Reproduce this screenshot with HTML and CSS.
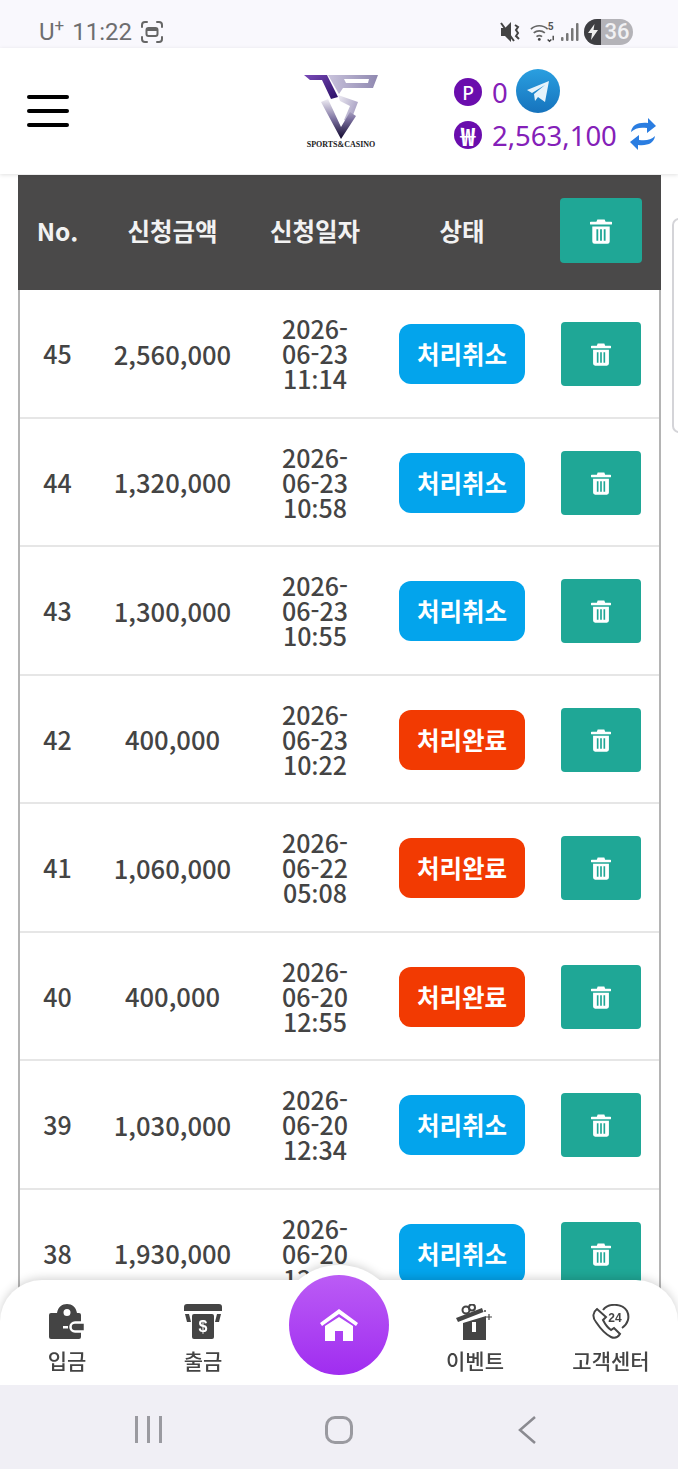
FILE: index.html
```html
<!DOCTYPE html>
<html lang="ko">
<head>
<meta charset="UTF-8">
<meta name="viewport" content="width=device-width, initial-scale=1.0">
<title>출금내역</title>
<link rel="stylesheet" href="styles.css">
</head>
<body>
<svg class="defs" width="0" height="0">
    <defs>
        <symbol id="trash" viewBox="0 0 24 28">
            <path fill="#fff" d="M8 1.5h8l1 2.5h6a1 1 0 0 1 0 3H1a1 1 0 0 1 0-3h6zM2.500 9h19v16.500a2.500 2.500 0 0 1-2.500 2.500H5a2.500 2.500 0 0 1-2.500-2.500zM7 12v12.500h2V12zm4 0v12.500h2V12zm4 0v12.500h2V12z" fill-rule="evenodd"/>
        </symbol>
    </defs>
</svg>
<div class="page">
    <!-- status bar -->
    <div class="status">
        <div class="status-left">
            <span class="carrier">U<sup>+</sup></span>
            <span>11:22</span>
            <svg width="24" height="24" viewBox="0 0 24 24" fill="none" stroke="#666" stroke-width="2" stroke-linecap="round">
                <path d="M2 7V5a3 3 0 0 1 3-3h2M17 2h2a3 3 0 0 1 3 3v2M22 17v2a3 3 0 0 1-3 3h-2M7 22H5a3 3 0 0 1-3-3v-2"/>
                <rect x="6.500" y="8" width="11" height="8" rx="2"/>
                <rect x="7" y="8" width="10" height="3" fill="#666" stroke="none"/>
            </svg>
        </div>
        <div class="status-right">
            <svg width="20" height="24" viewBox="0 0 20 24">
                <path fill="#444" d="M1 8h4l6-6v20l-6-6H1z"/>
                <path stroke="#444" stroke-width="2" fill="none" d="M1 3l13 18M15 5l3 2-2 3 2 3-2 3 3 3"/>
            </svg>
            <svg class="wifi" width="26" height="24" viewBox="0 0 28 24" fill="none" stroke="#666" stroke-width="1.800">
                <path d="M1 9c5-5 13-5 18 0M4 13c3.500-3 8.500-3 12 0M7 17c2-1.600 4-1.600 6 0"/>
                <circle cx="10" cy="20" r="1.500" fill="#444" stroke="none"/>
                <path d="M19 20l2 2 2-2M25 21v-5" stroke="#444" stroke-width="1.500"/>
                <text x="19" y="10" class="wifi-five">5</text>
            </svg>
            <svg width="18" height="20" viewBox="0 0 18 20" fill="#777">
                <rect x="0" y="15" width="2.500" height="4" rx="1"/>
                <rect x="5" y="11" width="2.500" height="8" rx="1"/>
                <rect x="10" y="6" width="2.500" height="13" rx="1"/>
                <rect x="15" y="1" width="2.500" height="18" rx="1"/>
            </svg>
            <div class="battery">
                <span class="battery-bolt">
                    <svg width="10" height="16" viewBox="0 0 10 16"><path fill="#eee" d="M6.500 0L0 9h4l-1 7 7-10H5.500z"/></svg>
                </span>
                <span class="battery-num">36</span>
            </div>
        </div>
    </div>

    <!-- header -->
    <header class="top">
        <div class="burger"><span></span><span></span><span></span></div>
        <div class="logo">
            <svg width="74" height="68" viewBox="0 0 74 68">
                <defs>
                    <linearGradient id="logoA" x1="0" y1="0" x2="1" y2="1">
                        <stop offset="0" stop-color="#7a4bb8"/>
                        <stop offset="1" stop-color="#2a0f66"/>
                    </linearGradient>
                    <linearGradient id="logoB" x1="0" y1="0" x2="0" y2="1">
                        <stop offset="0" stop-color="#f0eef4"/>
                        <stop offset="0.5" stop-color="#7d72a0"/>
                        <stop offset="1" stop-color="#0e052c"/>
                    </linearGradient>
                    <linearGradient id="logoC" x1="0" y1="0" x2="1" y2="0">
                        <stop offset="0" stop-color="#c9c3dc"/>
                        <stop offset="1" stop-color="#8f88b0"/>
                    </linearGradient>
                    <linearGradient id="logoD" x1="0" y1="0" x2="1" y2="0.600">
                        <stop offset="0" stop-color="#eeecf3"/>
                        <stop offset="1" stop-color="#a49cc0"/>
                    </linearGradient>
                </defs>
                <path fill="url(#logoC)" fill-rule="evenodd" d="M24 3h50l-5 13H39l-4 6zM40 7l2 4h22l1-4z"/>
                <path fill="url(#logoA)" d="M0 3h23l11 22-7 2-9-19H6z"/>
                <path fill="url(#logoD)" d="M34 23l20 7-8 21-6-3 6-14-10-5z"/>
                <path fill="url(#logoB)" d="M17 30l7-3 13 28 9-15 6 4-15 23z"/>
            </svg>
            <span class="logo-text">SPORTS&amp;CASINO</span>
        </div>
        <div class="balance">
            <div class="balance-row">
                <span class="coin">P</span>
                <span class="balance-num">0</span>
                <svg class="telegram" width="44" height="44" viewBox="0 0 44 44">
                    <defs>
                        <linearGradient id="tg" x1="0" y1="0" x2="0" y2="1">
                            <stop offset="0" stop-color="#2a9fe0"/>
                            <stop offset="1" stop-color="#1673bd"/>
                        </linearGradient>
                    </defs>
                    <circle cx="22" cy="22" r="22" fill="url(#tg)"/>
                    <path fill="#e6f3fb" d="M11 21l22-9-4 21-7-5-3 4-1-7 11-9-13 8z"/>
                </svg>
            </div>
            <div class="balance-row">
                <span class="coin coin-won">₩</span>
                <span class="balance-num">2,563,100</span>
                <svg class="refresh" width="28" height="34" viewBox="0 0 28 34" fill="#2a7de1">
                    <path d="M2 15C3 8 9 5 19 6V1l8 8-9 7v-5c-7-1-12 0-16 4z"/>
                    <path d="M26 19c-1 7-7 10-17 9v5l-8-8 9-7v5c7 1 12 0 16-4z"/>
                </svg>
            </div>
        </div>
    </header>

    <!-- list -->
    <main class="content">
        <div class="list">
            <div class="row row-head">
                <div>No.</div>
                <div>신청금액</div>
                <div>신청일자</div>
                <div>상태</div>
                <div><button class="trash trash-head"><svg width="22" height="26"><use href="#trash"/></svg></button></div>
            </div>
            <div class="row">
                <div>45</div>
                <div class="amount">2,560,000</div>
                <div class="date">2026-<br>06-23<br>11<i>:</i>14</div>
                <div><span class="pill pill-cancel">처리취소</span></div>
                <div><button class="trash"><svg width="20" height="24"><use href="#trash"/></svg></button></div>
            </div>
            <div class="row">
                <div>44</div>
                <div class="amount">1,320,000</div>
                <div class="date">2026-<br>06-23<br>10<i>:</i>58</div>
                <div><span class="pill pill-cancel">처리취소</span></div>
                <div><button class="trash"><svg width="20" height="24"><use href="#trash"/></svg></button></div>
            </div>
            <div class="row">
                <div>43</div>
                <div class="amount">1,300,000</div>
                <div class="date">2026-<br>06-23<br>10<i>:</i>55</div>
                <div><span class="pill pill-cancel">처리취소</span></div>
                <div><button class="trash"><svg width="20" height="24"><use href="#trash"/></svg></button></div>
            </div>
            <div class="row">
                <div>42</div>
                <div class="amount">400,000</div>
                <div class="date">2026-<br>06-23<br>10<i>:</i>22</div>
                <div><span class="pill pill-done">처리완료</span></div>
                <div><button class="trash"><svg width="20" height="24"><use href="#trash"/></svg></button></div>
            </div>
            <div class="row">
                <div>41</div>
                <div class="amount">1,060,000</div>
                <div class="date">2026-<br>06-22<br>05<i>:</i>08</div>
                <div><span class="pill pill-done">처리완료</span></div>
                <div><button class="trash"><svg width="20" height="24"><use href="#trash"/></svg></button></div>
            </div>
            <div class="row">
                <div>40</div>
                <div class="amount">400,000</div>
                <div class="date">2026-<br>06-20<br>12<i>:</i>55</div>
                <div><span class="pill pill-done">처리완료</span></div>
                <div><button class="trash"><svg width="20" height="24"><use href="#trash"/></svg></button></div>
            </div>
            <div class="row">
                <div>39</div>
                <div class="amount">1,030,000</div>
                <div class="date">2026-<br>06-20<br>12<i>:</i>34</div>
                <div><span class="pill pill-cancel">처리취소</span></div>
                <div><button class="trash"><svg width="20" height="24"><use href="#trash"/></svg></button></div>
            </div>
            <div class="row">
                <div>38</div>
                <div class="amount">1,930,000</div>
                <div class="date">2026-<br>06-20<br>12<i>:</i>30</div>
                <div><span class="pill pill-cancel">처리취소</span></div>
                <div><button class="trash"><svg width="20" height="24"><use href="#trash"/></svg></button></div>
            </div>
        </div>
        <div class="side-tab"></div>
    </main>

    <!-- bottom menu, sits over the list -->
    <nav class="bottom">
        <a class="bottom-item">
            <svg width="38" height="36" viewBox="0 0 38 36" fill="#444">
                <path fill-rule="evenodd" d="M9 9C10 3 14 0 19 0s9 3 10 9h2a2 2 0 0 1 2 2v22a2 2 0 0 1-2 2H3a2 2 0 0 1-2-2V11a2 2 0 0 1 2-2zM19 5a3.500 3.500 0 1 0 0 7 3.500 3.500 0 0 0 0-7zM15 22v2.500h5V22z"/>
                <path d="M37 18.500H27a4.500 4.500 0 0 0 0 9h10z" stroke="#fff" stroke-width="2.500"/>
            </svg>
            <span>입금</span>
        </a>
        <a class="bottom-item">
            <svg width="38" height="36" viewBox="0 0 38 36" fill="#444">
                <path d="M3 0h32a3 3 0 0 1 3 3v4H0V3a3 3 0 0 1 3-3z"/>
                <path d="M1 10h4l2 8H3zM33 10h4l-2 8h-4z"/>
                <rect x="8" y="10" width="22" height="25" rx="2"/>
                <text x="19" y="28" class="atm-dollar">$</text>
            </svg>
            <span>출금</span>
        </a>
        <a class="bottom-item bottom-home">
            <span class="home-btn">
                <svg width="38" height="32" viewBox="0 0 38 32" fill="#fff">
                    <path d="M19 0L38 14l-2 3L19 5 2 17l-2-3z"/>
                    <path fill-rule="evenodd" d="M5 17L19 8l14 9v15H5zM15 22v10h8V22z"/>
                </svg>
            </span>
        </a>
        <a class="bottom-item">
            <svg width="38" height="36" viewBox="0 0 38 36" fill="#444">
                <path d="M0 14L26 4l1.500 4L2 18z"/>
                <circle cx="10" cy="6" r="3.500" fill="none" stroke="#444" stroke-width="2"/>
                <circle cx="16" cy="3.500" r="3" fill="none" stroke="#444" stroke-width="2"/>
                <path fill-rule="evenodd" d="M7 19l23-7v24H7zM16 18v10h4V18z"/>
                <path d="M33 10v6M30 13h6" stroke="#444" stroke-width="1.200"/>
                <circle cx="29" cy="7" r="1"/>
            </svg>
            <span>이벤트</span>
        </a>
        <a class="bottom-item">
            <svg width="38" height="36" viewBox="0 0 38 36" fill="none" stroke="#444" stroke-width="2">
                <path d="M5 5C1 8 0 13 4 18c4 6 9 12 15 15 4 2 7 0 9-3l-6-6-3 2c-3-2-6-6-8-10l3-3z"/>
                <path d="M11 6C16-1 30-1 35 7c3 6 1 13-5 17"/>
                <text x="23" y="18" class="support-num">24</text>
            </svg>
            <span>고객센터</span>
        </a>
    </nav>

    <!-- android nav -->
    <div class="sysnav">
        <div class="sys-recent"><span></span><span></span><span></span></div>
        <div class="sys-home"></div>
        <svg width="20" height="30" viewBox="0 0 20 30" fill="none" stroke="#8a8a90" stroke-width="2.500">
            <path d="M18 2L3 15l15 13"/>
        </svg>
    </div>
</div>
</body>
</html>
```

FILE: styles.css
```css
* {
    box-sizing: border-box;
}
body {
    margin: 0;
    padding: 0;
    font-family: "Noto Sans CJK KR", "Noto Sans", sans-serif;
    background: #fff;
}
.defs {
    display: block;
    height: 0;
}
.page {
    position: relative;
    display: flex;
    flex-direction: column;
    width: 678px;
    height: 1469px;
    overflow: hidden;
}

/* status bar */
.status {
    display: flex;
    align-items: center;
    justify-content: space-between;
    flex: none;
    height: 48px;
    padding: 16px 45px 0 39px;
    background: #f9f8fd;
}
.status-left {
    display: flex;
    align-items: center;
    gap: 8px;
    font-family: Roboto, sans-serif;
    font-size: 24px;
    color: #6e6e70;
}
.carrier sup {
    font-size: 17px;
    line-height: 0;
}
.status-right {
    display: flex;
    align-items: center;
    gap: 5px;
}
.status-right > svg:first-child {
    margin-right: 5px;
}
.wifi-five {
    font-family: Roboto, sans-serif;
    font-size: 11px;
    font-weight: 700;
    fill: #555;
    stroke: none;
}
.battery {
    display: flex;
    width: 49px;
    height: 26px;
    overflow: hidden;
    border-radius: 13px;
    background: #b4b3b8;
}
.battery-bolt {
    display: flex;
    align-items: center;
    justify-content: center;
    width: 17px;
    background: #3e3e42;
}
.battery-num {
    flex: 1;
    font-family: Roboto, sans-serif;
    font-size: 22px;
    font-weight: 500;
    line-height: 26px;
    text-align: center;
    color: #f1f1f3;
}

/* header */
.top {
    display: flex;
    align-items: center;
    flex: none;
    height: 126px;
    padding-left: 27px;
    background: #fff;
    box-shadow: 0 1px 4px rgba(0, 0, 0, 0.12);
    z-index: 2;
}
.burger {
    display: flex;
    flex-direction: column;
    gap: 10.5px;
    width: 42px;
}
.burger span {
    height: 3.5px;
    border-radius: 2px;
    background: #000;
}
.logo {
    display: flex;
    flex-direction: column;
    align-items: center;
    width: 74px;
    margin-left: 235px;
}
.logo-text {
    font-family: "Liberation Serif", serif;
    font-size: 8px;
    font-weight: 700;
    line-height: 10px;
    white-space: nowrap;
    color: #222;
}
.balance {
    display: flex;
    flex-direction: column;
    margin-top: 5px;
    margin-left: 76px;
}
.balance-row {
    display: flex;
    align-items: center;
    height: 43px;
}
.coin {
    display: flex;
    align-items: center;
    justify-content: center;
    width: 28px;
    height: 28px;
    border-radius: 50%;
    font-size: 18px;
    font-weight: 500;
    color: #fff;
    background: #6a0dad;
}
.coin-won {
    font-size: 25px;
    font-weight: 700;
}
.balance-num {
    margin-left: 10px;
    font-family: "Noto Sans", sans-serif;
    font-size: 27.5px;
    color: #8420b8;
}
.telegram {
    margin-top: -3px;
    margin-left: 8px;
}
.refresh {
    margin-top: -3px;
    margin-left: 12px;
}

/* list */
.content {
    position: relative;
    flex: 1;
    overflow: hidden;
    background: #fff;
}
.list {
    width: 643px;
    margin: 1px 0 0 18px;
    border-right: 2px solid #b4b4b4;
    border-left: 2px solid #b4b4b4;
}
.row {
    display: grid;
    grid-template-columns: 75px 155px 130px 164px 1fr;
    align-items: center;
    height: 128.5px;
    border-bottom: 2px solid #e6e6e6;
    font-size: 25px;
    font-weight: 500;
    text-align: center;
    color: #444;
}
.row > div:last-child {
    padding-right: 2px;
}
.amount {
    font-size: 25.6px;
}
.row-head {
    height: 115px;
    margin: 0 -2px;
    padding: 0 2px 4px;
    border-bottom: none;
    font-size: 24.5px;
    font-weight: 700;
    color: #f2f2f2;
    background: #4a4949;
}
.date {
    margin-top: 2px;
    line-height: 25px;
}
.date i {
    font-family: "Noto Sans", sans-serif;
    font-style: normal;
}
.pill {
    display: inline-block;
    width: 126px;
    height: 60px;
    margin-top: 2px;
    border-radius: 12px;
    font-size: 24.5px;
    font-weight: 700;
    line-height: 60px;
    color: #fff;
}
.pill-cancel {
    background: #03a4ec;
}
.pill-done {
    background: #f23a02;
}
.trash {
    display: inline-flex;
    align-items: center;
    justify-content: center;
    width: 80px;
    height: 64px;
    margin-top: 2px;
    padding: 0;
    border: none;
    border-radius: 4px;
    background: #1fa796;
}
.trash-head {
    width: 82px;
    height: 65px;
    margin-top: 0;
}
.side-tab {
    position: absolute;
    top: 44px;
    right: -8px;
    width: 14px;
    height: 215px;
    border: 2px solid #d4d4d8;
    border-radius: 8px;
    background: #fff;
}

/* bottom menu */
.bottom {
    position: absolute;
    right: 0;
    bottom: 84px;
    left: 0;
    display: grid;
    grid-template-columns: repeat(5, 136px);
    justify-content: center;
    height: 105px;
    border-radius: 42px 42px 0 0;
    background: #fff;
    filter: drop-shadow(0 -2px 4px rgba(0, 0, 0, 0.16));
}
.bottom::before {
    content: "";
    position: absolute;
    top: -15px;
    left: 278px;
    width: 122px;
    height: 120px;
    border-radius: 50%;
    background: #fff;
}
.bottom-item {
    position: relative;
    display: flex;
    flex-direction: column;
    align-items: center;
    padding-top: 24px;
    font-size: 21px;
    font-weight: 500;
    line-height: 30px;
    color: #444;
}
.bottom-item span {
    margin-top: 5px;
}
.bottom-item .home-btn {
    position: absolute;
    top: -5px;
    left: 18px;
    display: flex;
    align-items: center;
    justify-content: center;
    width: 100px;
    height: 100px;
    margin-top: 0;
    border-radius: 50%;
    background: linear-gradient(180deg, #bb5cf5, #a02df0);
}
.atm-dollar {
    font-family: "Liberation Sans", sans-serif;
    font-size: 16px;
    font-weight: 700;
    text-anchor: middle;
    fill: #fff;
}
.support-num {
    font-family: "Liberation Sans", sans-serif;
    font-size: 12px;
    font-weight: 700;
    text-anchor: middle;
    fill: #444;
    stroke: none;
}

/* android nav */
.sysnav {
    display: grid;
    grid-template-columns: 296px 86px 1fr;
    align-items: center;
    justify-items: center;
    flex: none;
    height: 84px;
    padding-top: 5px;
    background: #f0eff5;
    z-index: 1;
}
.sysnav svg {
    justify-self: start;
    margin-left: 135px;
}
.sys-recent {
    display: flex;
    gap: 9px;
    justify-self: start;
    margin-left: 135px;
}
.sys-recent span {
    width: 3px;
    height: 27px;
    background: #9a9aa0;
}
.sys-home {
    width: 28px;
    height: 28px;
    border: 3px solid #9a9aa0;
    border-radius: 10px;
}
```
